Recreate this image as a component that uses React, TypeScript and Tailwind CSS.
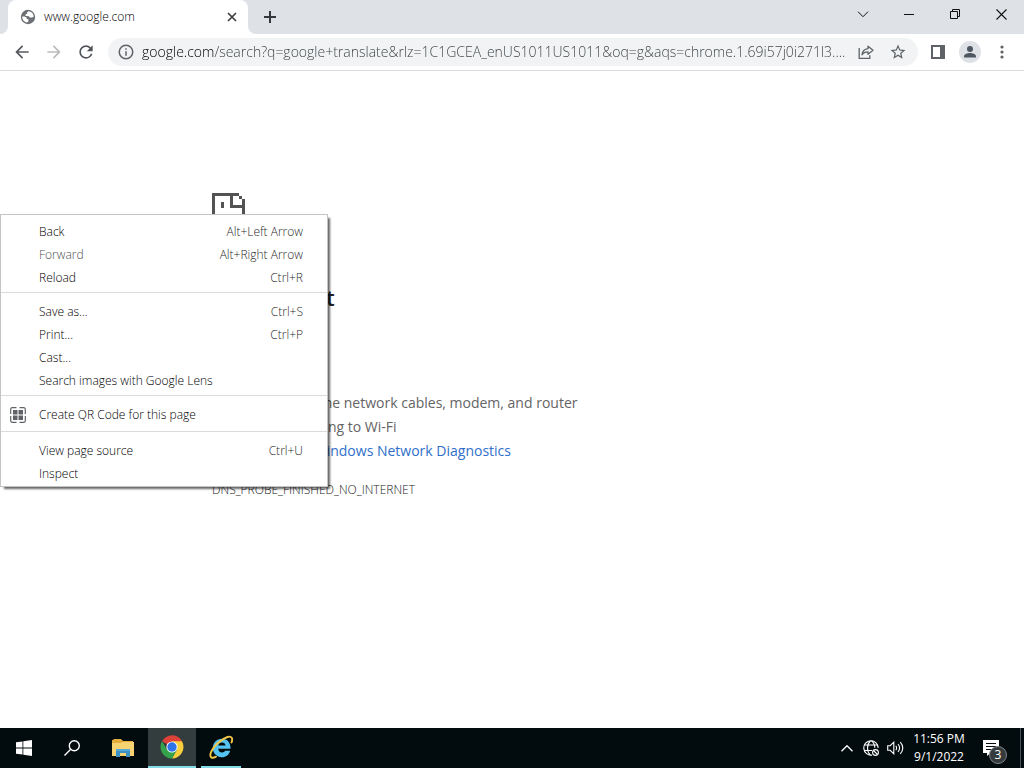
import React from "react";

const pageUrl =
  "google.com/search?q=google+translate&rlz=1C1GCEA_enUS1011US1011&oq=g&aqs=chrome.1.69i57j0i271l3....";

function TabStrip() {
  return (
    <div className="flex h-[34px] items-stretch bg-[#dee1e6]">
      <svg className="h-2 w-2 shrink-0 self-end" viewBox="0 0 8 8" fill="#fff" aria-hidden="true">
        <path d="M8 0v8H0a8 8 0 0 0 8-8z" />
      </svg>
      <div className="flex w-60 items-center rounded-t-lg bg-white pr-[10px] pl-3">
        <svg className="size-4 shrink-0" viewBox="0 0 16 16" aria-hidden="true">
          <circle cx="8" cy="8" r="7.2" fill="#6d7175" />
          <path
            d="M8.6 2.2 7 3.4l.2 1.3-1.5.5-.4 1.6 1.7.3 2 .1.7 1.3 2 .1 1.9-.6c.3-2.9-1.6-5.3-5-5.8z"
            fill="#fff"
          />
          <path d="M2.2 7.6c-.1 3 1.9 5.6 4.9 6l1.3-1.4.1-1.7-1.8-.8-.2-1.3-2.1-.9z" fill="#fff" />
        </svg>
        <span className="ml-2 flex-1 text-xs leading-4 font-light text-black">www.google.com</span>
        <button type="button" aria-label="Close tab" className="flex size-3 items-center justify-center">
          <svg className="size-3" viewBox="0 0 12 12" stroke="#3c4043" strokeWidth="1.7" aria-hidden="true">
            <path d="m2 2 8 8m0-8-8 8" />
          </svg>
        </button>
      </div>
      <svg className="h-2 w-2 shrink-0 self-end" viewBox="0 0 8 8" fill="#fff" aria-hidden="true">
        <path d="M0 0v8h8a8 8 0 0 1-8-8z" />
      </svg>
      <button type="button" aria-label="New tab" className="flex w-7 items-center justify-center">
        <svg className="size-3" viewBox="0 0 12 12" stroke="#35383b" strokeWidth="2" aria-hidden="true">
          <path d="M6 0v12M0 6h12" />
        </svg>
      </button>
      <div className="flex-1" />
      <div className="flex h-7 text-[#111]">
        <button type="button" aria-label="Search tabs" className="flex w-[46px] items-center justify-center">
          <svg className="h-[7px] w-3" viewBox="0 0 12 7" fill="none" stroke="currentColor" aria-hidden="true">
            <path d="m1 .7 5 5 5-5" />
          </svg>
        </button>
        <button type="button" aria-label="Minimize" className="flex w-[46px] items-center justify-center">
          <svg className="h-px w-[10px]" viewBox="0 0 10 1" fill="currentColor" aria-hidden="true">
            <path d="M0 0h10v1H0z" />
          </svg>
        </button>
        <button type="button" aria-label="Restore" className="flex w-[46px] items-center justify-center">
          <svg className="size-[10px]" viewBox="0 0 10 10" fill="none" stroke="currentColor" aria-hidden="true">
            <path d="M.5 2.5h7v7h-7zM2.500 2.500V.5h7v7h-2" />
          </svg>
        </button>
        <button type="button" aria-label="Close" className="flex w-[46px] items-center justify-center">
          <svg className="size-[11px]" viewBox="0 0 11 11" stroke="currentColor" strokeWidth="1.1" aria-hidden="true">
            <path d="m.5.500 10 10m0-10-10 10" />
          </svg>
        </button>
      </div>
    </div>
  );
}

function Toolbar() {
  return (
    <div className="flex h-[37px] items-center border-b border-[#d9dbde] bg-white pr-[6px] pl-[6px] text-[#5f6368]">
      <button type="button" aria-label="Back" className="flex w-8 justify-center text-[#55595d]">
        <svg className="size-5" viewBox="0 0 24 24" fill="currentColor" aria-hidden="true">
          <path d="M20 11H7.830l5.590-5.590L12 4l-8 8 8 8 1.410-1.410L7.830 13H20v-2z" />
        </svg>
      </button>
      <button type="button" aria-label="Forward" disabled className="flex w-8 justify-center text-[#babcbe]">
        <svg className="size-5" viewBox="0 0 24 24" fill="currentColor" aria-hidden="true">
          <path d="m12 4-1.410 1.410L16.170 11H4v2h12.170l-5.580 5.590L12 20l8-8z" />
        </svg>
      </button>
      <button type="button" aria-label="Reload" className="flex w-8 justify-center text-[#505458]">
        <svg className="size-5" viewBox="0 0 24 24" fill="currentColor" aria-hidden="true">
          <path d="M17.650 6.350A7.958 7.958 0 0 0 12 4a8 8 0 1 0 7.730 10h-2.080A5.990 5.990 0 0 1 12 18c-3.310 0-6-2.690-6-6s2.690-6 6-6c1.660 0 3.140.690 4.220 1.780L13 11h7V4l-2.350 2.350z" />
        </svg>
      </button>
      <div className="ml-[6px] flex h-7 min-w-0 flex-1 items-center rounded-full bg-[#f1f3f4] pr-3 pl-[9px]">
        <svg className="size-[18px] shrink-0" viewBox="0 0 24 24" fill="currentColor" aria-hidden="true">
          <path d="M11 7h2v2h-2zm0 4h2v6h-2zm1-9a10 10 0 1 0 0 20 10 10 0 0 0 0-20zm0 18a8 8 0 1 1 0-16 8 8 0 0 1 0 16z" />
        </svg>
        <input
          type="text"
          aria-label="Address and search bar"
          defaultValue={pageUrl}
          className="ml-[7px] min-w-0 flex-1 bg-[linear-gradient(to_right,#000_73px,#3c4043_73px)] bg-clip-text text-sm leading-5 font-light text-transparent outline-none"
        />
        <button type="button" aria-label="Share this page" className="flex w-4 shrink-0 justify-center">
          <svg className="size-4" viewBox="0 0 16 16" fill="none" stroke="currentColor" strokeWidth="1.300" aria-hidden="true">
            <path d="M1.200 4v10.300h10.600v-3" />
            <path d="M10 2.200 15 6.300l-5 4V7.800c-2.600 0-4.600.7-6 3 .4-3.400 2.400-5.700 6-6.100z" strokeLinejoin="round" />
          </svg>
        </button>
        <button type="button" aria-label="Bookmark this tab" className="ml-4 flex w-4 shrink-0 justify-center">
          <svg className="size-[18px] shrink-0" viewBox="0 0 24 24" fill="currentColor" aria-hidden="true">
            <path d="m22 9.240-7.190-.620L12 2 9.190 8.630 2 9.240l5.460 4.730L5.820 21 12 17.270 18.180 21l-1.630-7.030L22 9.240zM12 15.400l-3.760 2.270 1-4.280-3.320-2.880 4.380-.380L12 6.100l1.710 4.040 4.380.380-3.320 2.880 1 4.280L12 15.400z" />
          </svg>
        </button>
      </div>
      <button type="button" aria-label="Side panel" className="ml-1 flex w-8 justify-center">
        <svg className="size-[14px]" viewBox="0 0 14 14" fill="currentColor" aria-hidden="true">
          <path fillRule="evenodd" d="M0 0h14v14H0zM2 2v10h7V2z" />
        </svg>
      </button>
      <button type="button" aria-label="Profile" className="flex w-8 justify-center">
        <svg className="size-[22px]" viewBox="0 0 22 22" aria-hidden="true">
          <circle cx="11" cy="11" r="11" fill="#dee1e6" />
          <circle cx="11" cy="8" r="3" fill="#4d5661" />
          <path d="M5 16.500v-1.200c0-2.200 3.800-3.300 6-3.300s6 1.100 6 3.300v1.200z" fill="#4d5661" />
        </svg>
      </button>
      <button type="button" aria-label="Menu" className="flex w-8 justify-center">
        <svg className="h-[14px] w-1" viewBox="0 0 4 14" fill="currentColor" aria-hidden="true">
          <circle cx="2" cy="2" r="1.600" />
          <circle cx="2" cy="7" r="1.600" />
          <circle cx="2" cy="12" r="1.600" />
        </svg>
      </button>
    </div>
  );
}

function ErrorPage() {
  return (
    <main className="mx-auto w-full max-w-[600px] pt-[122px] text-sm leading-6 text-[#646464]">
      <svg className="h-[42px] w-[34px]" viewBox="0 0 34 42" fill="#535353" shapeRendering="crispEdges" aria-hidden="true">
        <path d="M0 0h27v3h-6v9h12v30H0zM3 3v36h27V15H18V3z" fillRule="evenodd" />
        <path d="M27 3h3v3h-3zM30 6h3v6h-3zM9 9h3v6H9zM9 27h12v3H9z" />
      </svg>
      <h1 className="mt-12 text-[22px] leading-7 font-semibold text-[#202124]">No internet</h1>
      <p className="mt-5">Try:</p>
      <ul className="mt-9 list-disc pl-11">
        <li>Checking the network cables, modem, and router</li>
        <li>Reconnecting to Wi-Fi</li>
        <li>
          <a href="#diagnostics" className="text-[#2f6fc9]">
            Running Windows Network Diagnostics
          </a>
        </li>
      </ul>
      <p className="mt-[15px] text-xs leading-6 font-light text-[#222]">DNS_PROBE_FINISHED_NO_INTERNET</p>
    </main>
  );
}

type Item = { label: string; keys?: string; disabled?: boolean; qr?: boolean };

const groups: { pad: string; items: Item[] }[] = [
  {
    pad: "pt-[5px] pb-[3px]",
    items: [
      { label: "Back", keys: "Alt+Left Arrow" },
      { label: "Forward", keys: "Alt+Right Arrow", disabled: true },
      { label: "Reload", keys: "Ctrl+R" },
    ],
  },
  {
    pad: "pt-[7px] pb-[3px]",
    items: [
      { label: "Save as...", keys: "Ctrl+S" },
      { label: "Print...", keys: "Ctrl+P" },
      { label: "Cast..." },
      { label: "Search images with Google Lens" },
    ],
  },
  { pad: "pt-[7px] pb-[5px]", items: [{ label: "Create QR Code for this page", qr: true }] },
  { pad: "pt-[7px] pb-px", items: [{ label: "View page source", keys: "Ctrl+U" }, { label: "Inspect" }] },
];

function QrIcon() {
  return (
    <svg className="size-4" viewBox="0 0 16 16" fill="none" stroke="#5f6368" strokeWidth="1.200" aria-hidden="true">
      <path d="M.700 7V2.200A1.500 1.500 0 0 1 2.200.7H6.500M9.500.7h4.300a1.500 1.500 0 0 1 1.500 1.500V7M15.300 9v4.800a1.500 1.500 0 0 1-1.500 1.500H9.500M6.500 15.300H2.200a1.500 1.500 0 0 1-1.500-1.500V9" />
      <path d="M3 3h4.500v4.500H3zM8.500 3H13v4.500H8.500zM3 8.500h4.500V13H3zM8.500 8.500H13V13H8.500z" fill="#5f6368" stroke="none" />
    </svg>
  );
}

function ContextMenu() {
  return (
    <div
      role="menu"
      className="absolute top-[214px] left-0 w-[328px] divide-y divide-[#dcdcdc] border border-[#c4c4c4] bg-white text-xs font-light shadow-[3px_3px_2px_-1px_rgba(0,0,0,0.6)]"
    >
      {groups.map((group, i) => (
        <div key={i} className={group.pad}>
          {group.items.map((item) => (
            <button
              key={item.label}
              type="button"
              role="menuitem"
              disabled={item.disabled}
              className="flex h-[23px] w-full items-center pr-6 text-left text-[#2a2a2a]"
            >
              <span className="flex w-[38px] pl-[9px]">{item.qr && <QrIcon />}</span>
              <span className={item.disabled ? "flex-1 text-[#505050]" : "flex-1 text-black"}>{item.label}</span>
              {item.keys && <span>{item.keys}</span>}
            </button>
          ))}
        </div>
      ))}
    </div>
  );
}

function Taskbar() {
  return (
    <footer className="flex h-10 items-stretch bg-[#020b0d] text-white">
      <button type="button" aria-label="Start" className="flex w-12 items-center justify-center">
        <svg className="size-4" viewBox="0 0 16 16" fill="#fff" aria-hidden="true">
          <path d="M0 2.300 6.500 1.400v6.200H0zM7.300 1.300 16 0v7.600H7.300zM0 8.400h6.500v6.200L0 13.700zM7.300 8.400H16V16l-8.700-1.300z" />
        </svg>
      </button>
      <button type="button" aria-label="Search" className="flex w-12 items-center justify-center">
        <svg className="size-4" viewBox="0 0 16 16" fill="none" stroke="#fff" strokeWidth="1.400" aria-hidden="true">
          <circle cx="10.300" cy="5.700" r="5" />
          <path d="M6.700 9.300.500 15.500" />
        </svg>
      </button>
      <button type="button" aria-label="File Explorer" className="ml-[3px] flex w-12 items-center justify-center">
        <svg className="h-[18px] w-[22px]" viewBox="0 0 22 18" aria-hidden="true">
          <path d="M0 1h1l1-1h7l2 2h10v15H0z" fill="#e2ad3b" />
          <path d="M0 4h9l2-1h11v14H0z" fill="#f8d371" />
          <path d="M4 10h14v8h-4v-4H8v4H4z" fill="#3d91c5" />
          <path d="M4 10h14v2H4z" fill="#58a9d8" />
        </svg>
      </button>
      <button
        type="button"
        aria-label="Google Chrome"
        className="ml-px flex w-12 items-center justify-center border-b-2 border-[#82dbe5] bg-[#343d3e]"
      >
        <svg className="size-6" viewBox="0 0 24 24" aria-hidden="true">
          <path d="M12 12 2.040 6.250A11.500 11.500 0 0 1 21.960 6.250z" fill="#dc4237" />
          <path d="M12 6.300h9.980A11.500 11.500 0 0 0 12 .5z" fill="#dc4237" />
          <path d="m16.940 14.850-4.990 8.650A11.500 11.500 0 0 0 21.980 6.300H12z" fill="#f9cf3d" />
          <path d="M7.060 14.850 2.040 6.250A11.500 11.500 0 0 0 11.950 23.500l4.990-8.650z" fill="#35a34c" />
          <circle cx="12" cy="12" r="5.600" fill="#fff" />
          <circle cx="12" cy="12" r="4.700" fill="#2f74e8" />
        </svg>
      </button>
      <button type="button" aria-label="Internet Explorer" className="mx-[5px] flex w-10 items-center justify-center border-b-2 border-[#82dbe5]">
        <svg className="size-6" viewBox="0 0 24 24" aria-hidden="true">
          <path
            d="M21.500 13.700H9.200c.2 2.300 1.600 3.700 3.800 3.700 1.500 0 2.500-.6 3.100-1.700h5c-1 4.200-4 6.500-8.300 6.500-5.200 0-8.900-3.800-8.900-9.100S7.700 3.800 13 3.800c5.400 0 8.700 3.900 8.500 9.900zM9.300 10.500h7.300c-.3-1.900-1.600-3-3.600-3s-3.400 1.100-3.700 3z"
            fill="#55c3ef"
          />
          <path
            d="M22.500 7.500C24.200 3.500 22.600.600 18.500 2 12 4.100 4.100 11.500 2 17.200c-1.800 4.800.500 7 5 4.500"
            fill="none"
            stroke="#f3c844"
            strokeWidth="1.900"
            strokeLinecap="round"
          />
        </svg>
      </button>
      <div className="flex-1" />
      <button type="button" aria-label="Show hidden icons" className="flex w-6 items-center justify-center">
        <svg className="h-[7px] w-3" viewBox="0 0 12 7" fill="none" stroke="#fff" strokeWidth="1.300" aria-hidden="true">
          <path d="m.5 6.200 5.500-5.500 5.500 5.500" />
        </svg>
      </button>
      <button type="button" aria-label="Network: no internet" className="flex w-6 items-center justify-center">
        <svg className="size-4" viewBox="0 0 16 16" fill="none" stroke="#fff" strokeWidth="1.100" aria-hidden="true">
          <path d="M9 15.100A7.200 7.200 0 1 1 15.200 8" />
          <path d="M7.500.8C3.500 4.500 3.500 11.500 7.500 15.200M8.500.8c2.300 1.800 3.200 4.200 3.300 7M1.500 5h13M1.500 10.500h7.500" />
          <circle cx="12.500" cy="12.500" r="2.900" fill="#020b0d" />
          <path d="m10.500 10.500 4 4" />
        </svg>
      </button>
      <button type="button" aria-label="Volume" className="flex w-6 items-center justify-center">
        <svg className="h-[14px] w-[17px]" viewBox="0 0 17 14" fill="none" stroke="#fff" strokeWidth="1.100" aria-hidden="true">
          <path d="M.7 4.700h2.500l3.600-3.500v11.600L3.200 9.300H.7zM8.800 4.800q1.600 2.200 0 4.400M11 3q3.200 4 0 8M13.300 1.200q5 5.800 0 11.600" />
        </svg>
      </button>
      <button type="button" className="w-16 text-xs leading-[18px]">
        <span className="block whitespace-nowrap">11:56 PM</span>
        <span className="block whitespace-nowrap">9/1/2022</span>
      </button>
      <button type="button" aria-label="3 notifications" className="relative mr-[1px] flex w-12 items-center pl-[12px]">
        <svg className="h-4 w-4" viewBox="0 0 16 16" aria-hidden="true">
          <path d="M0 0h16v13H7.500L4 16v-3H0z" fill="#fff" />
          <path d="M3 3.500h10M3 6.500h10M3 9.500h7" stroke="#020b0d" strokeWidth="1.200" />
        </svg>
        <span className="absolute top-[18px] left-[18px] flex size-[18px] items-center justify-center rounded-full border border-[#808588] bg-[#353a3d] text-xs">
          3
        </span>
      </button>
      <div className="w-1 border-l border-[#465256]" />
    </footer>
  );
}

export default function App() {
  return (
    <div className="relative flex min-h-screen flex-col bg-white font-['Open_Sans','Noto_Sans',sans-serif]">
      <TabStrip />
      <Toolbar />
      <div className="flex-1">
        <ErrorPage />
      </div>
      <ContextMenu />
      <Taskbar />
    </div>
  );
}
